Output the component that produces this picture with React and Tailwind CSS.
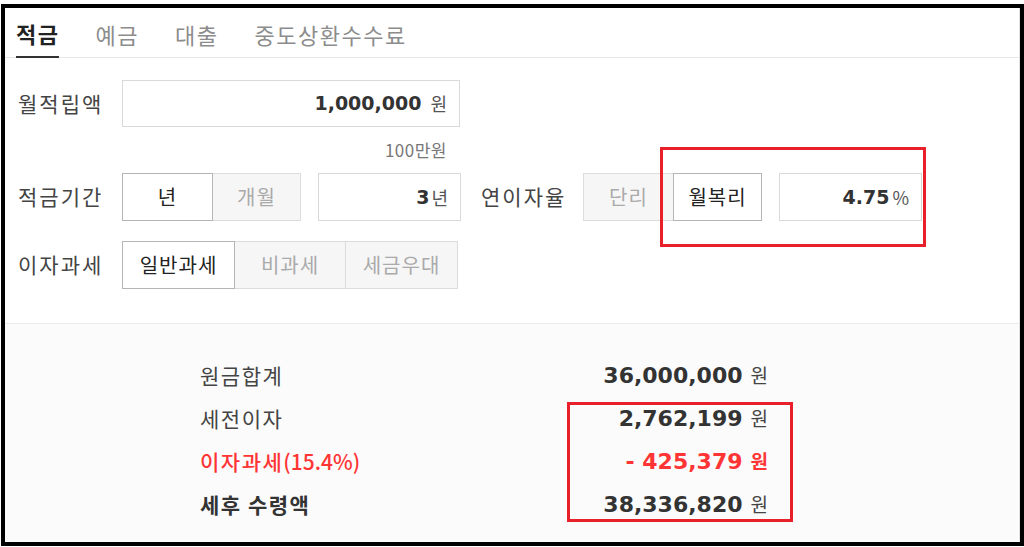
const KR = { fontFamily: '"Noto Sans CJK KR", "Noto Sans", sans-serif' };

const Num = ({ children, className = '' }) => (
    <span className={`font-['DejaVu_Sans',sans-serif] font-bold tracking-normal ${className}`}>{children}</span>
);

const Toggle = ({ items, active, widths }) => (
    <div className="flex h-full">
        {items.map((label, i) => (
            <div
                key={label}
                className={`flex items-center justify-center h-full border text-[20px] tracking-[1px] ${i > 0 ? '-ml-px' : ''} ${widths[i]} ${
                    i === active
                        ? 'relative z-10 bg-white border-[#b5b5b5] text-[#222]'
                        : 'bg-[#f6f6f6] border-[#dcdcdc] text-[#aaa]'
                }`}
            >
                {label}
            </div>
        ))}
    </div>
);

const InputBox = ({ value, unit, width, gap }) => (
    <div className={`flex items-center justify-end h-full border border-[#d9d9d9] bg-white pr-[12px] ${width}`}>
        <Num className="text-[19px] text-[#333]">{value}</Num>
        <span className={`text-[18px] tracking-normal text-[#555] ${gap}`}>{unit}</span>
    </div>
);

const ResultRow = ({ label, note, value, tone }) => {
    const red = tone === 'red';
    const strong = tone === 'strong';
    return (
        <div className="flex items-center justify-between h-[43px] w-[568px]">
            <span
                className={`text-[21px] tracking-[1.5px] ${
                    red ? 'font-medium text-[#ff3535]' : strong ? 'font-bold text-[#333]' : 'text-[#444]'
                }`}
            >
                {label}
                {note && <span className="tracking-normal">{note}</span>}
            </span>
            <span className="flex items-center">
                <Num className={`text-[22px] ${red ? 'text-[#ff3535]' : 'text-[#333]'}`}>{value}</Num>
                <span className={`ml-[8px] text-[19px] ${red ? 'font-bold text-[#ff3535]' : 'text-[#444]'}`}>원</span>
            </span>
        </div>
    );
};

export default function App() {
    const tabs = ['적금', '예금', '대출', '중도상환수수료'];

    return (
        <div className="relative w-[1024px] h-[547px] bg-white pl-[1px] pt-[4px]" style={KR}>
            <div className="flex flex-col w-[1023px] h-[542px] border-4 border-black">
                <div className="flex flex-col flex-1 border-r border-[#e3e3e3]">
                    {/* tabs */}
                    <div className="flex gap-[36px] h-[50px] pl-[11px] border-b border-[#e8e8e8]">
                        {tabs.map((t, i) => (
                            <div
                                key={t}
                                className={`flex items-center text-[22px] tracking-[1.5px] pt-[3px] ${
                                    i === 0 ? 'font-bold text-[#222] border-b-2 border-[#333] -mb-px' : 'text-[#8c8c8c]'
                                }`}
                            >
                                {t}
                            </div>
                        ))}
                    </div>

                    {/* form */}
                    <div className="pl-[13px] pt-[22px] pb-[34px] border-b border-[#ececec] text-[21px] tracking-[2px] text-[#444]">
                        <div className="flex items-center h-[47px]">
                            <div className="w-[104px]">월적립액</div>
                            <InputBox value="1,000,000" unit="원" width="w-[338px]" gap="ml-[9px]" />
                        </div>
                        <div className="flex items-center justify-end w-[442px] h-[46px] pr-[13px] text-[17px] tracking-[0.5px] text-[#777]">
                            100만원
                        </div>
                        <div className="flex items-center h-[48px]">
                            <div className="w-[104px]">적금기간</div>
                            <Toggle items={['년', '개월']} active={0} widths={['w-[91px]', 'w-[89px]']} />
                            <div className="ml-[17px] h-full">
                                <InputBox value="3" unit="년" width="w-[143px]" gap="ml-[2px]" />
                            </div>
                            <div className="w-[102px] ml-[20px]">연이자율</div>
                            <Toggle items={['단리', '월복리']} active={1} widths={['w-[91px]', 'w-[89px]']} />
                            <div className="ml-[17px] h-full">
                                <InputBox value="4.75" unit="%" width="w-[143px]" gap="ml-[3px]" />
                            </div>
                        </div>
                        <div className="flex items-center h-[48px] mt-[20px]">
                            <div className="w-[104px]">이자과세</div>
                            <Toggle
                                items={['일반과세', '비과세', '세금우대']}
                                active={0}
                                widths={['w-[113px]', 'w-[112px]', 'w-[113px]']}
                            />
                        </div>
                    </div>

                    {/* results */}
                    <div className="flex-1 bg-[#fbfbfb] pl-[195px] pt-[30px]">
                        <ResultRow label="원금합계" value="36,000,000" />
                        <ResultRow label="세전이자" value="2,762,199" />
                        <ResultRow label="이자과세" note="(15.4%)" value="- 425,379" tone="red" />
                        <ResultRow label="세후 수령액" value="38,336,820" tone="strong" />
                    </div>
                </div>
            </div>

            {/* annotation boxes */}
            <div className="absolute left-[660px] top-[147px] w-[266px] h-[100px] border-[3px] border-[#e8202a]" />
            <div className="absolute left-[567px] top-[402px] w-[226px] h-[120px] border-[3px] border-[#e8202a]" />
        </div>
    );
}
